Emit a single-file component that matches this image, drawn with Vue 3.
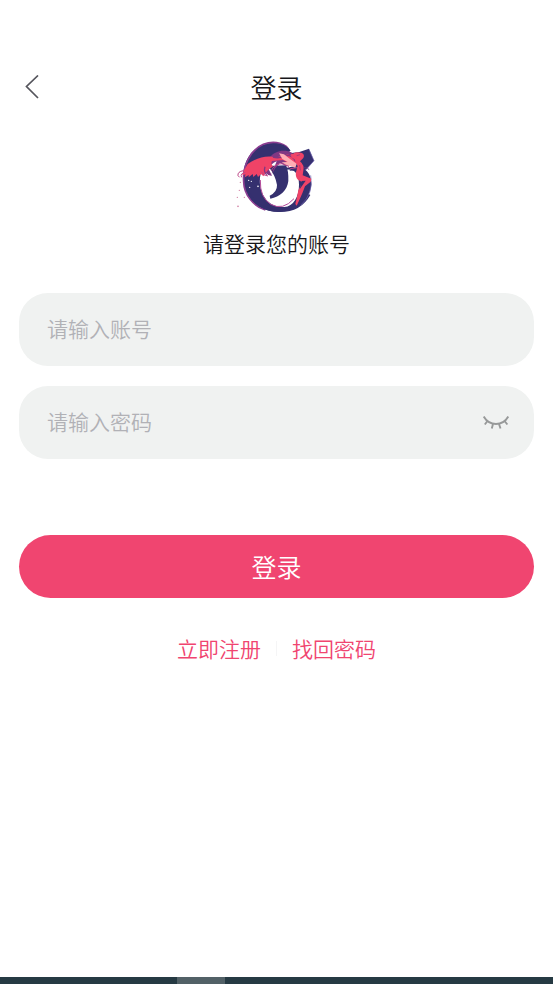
<template>
	<div class="page">
		<header class="header">
			<button type="button" class="back-btn" aria-label="返回">
				<svg width="14" height="24" viewBox="0 0 14 24">
					<path d="M13 .5 L1.5 11.5 L13 23" fill="none" stroke="#55555c" stroke-width="1.7" />
				</svg>
			</button>
			<h1 class="header-title">登录</h1>
		</header>

		<main class="content">
			<svg class="logo" viewBox="4 0 270 240" aria-hidden="true">
				<path
					d="M176 46 C172 29 149 19 122 20 C76 23 38 64 37 122 C36 178 75 222 130 227 C188 232 238 195 242 147 C243 114 225 93 196 90 L168 95 C157 92 148 94 139 99 L158 103 C190 94 205 113 205 146 C205 183 188 211 161 213 C120 216 92 183 88 146 C85 113 97 85 119 69 L172 47 Z"
					fill="#35306f"
				/>
				<path
					d="M176 46 C170 23 132 12 98 25 C57 43 36 91 39 137 C40 176 68 211 104 222"
					fill="none"
					stroke="#8c3d91"
					stroke-width="5"
				/>
				<path
					d="M109 33 Q151 14 177 46 M56 175 Q79 217 135 224 Q205 230 236 175"
					fill="none"
					stroke="#35306f"
					stroke-width="7"
				/>
				<path d="M89 132 Q87 184 120 205 Q157 225 190 188" fill="none" stroke="#b34b9b" stroke-width="3" />
				<path
					d="M112 90 L166 88 Q174 104 173 135 C170 163 148 183 119 188 L117 179 Q140 168 139 147 Q135 119 112 90 Z"
					fill="#35306f"
				/>
				<path d="M177 52 L206 48 L235 38 L250 74 L226 101 L176 104 L200 82 Z" fill="#35306f" />
				<path d="M235 41 L250 74 L226 101 M240 118 Q250 173 210 208" fill="none" stroke="#7064b0" stroke-width="2" />
				<path
					d="M184 50 C157 38 132 47 119 62 C101 76 95 98 107 112 Q112 120 124 119 L115 101 Q121 81 138 76 L122 116 L134 97 L148 81 L167 91 L200 82 L195 66 Z"
					fill="#813783"
				/>
				<path
					d="M207 55 C165 48 151 70 124 62 C98 59 71 70 51 84 C44 96 37 106 35 118 L44 115 L43 124 L54 117 L54 124 L66 114 L68 123 L78 114 L82 123 L91 114 L98 121 L110 104 L127 91 Q119 82 124 75 L157 72 L170 79 L198 84 Z"
					fill="#f04367"
				/>
				<path
					d="M103 92 Q98 107 108 116 M127 63 Q148 70 181 54"
					fill="none"
					stroke="#813783"
					stroke-width="4"
				/>
				<path
					d="M38 104 Q20 107 22 119 L27 124 M44 109 Q27 112 33 124 M92 107 Q97 119 112 120 M122 104 Q130 87 145 84 Q164 80 180 98 L207 94"
					fill="none"
					stroke="#bd4687"
					stroke-width="3"
				/>
				<path d="M145 52 L160 55 L177 68 L198 83 L194 95 L166 86 L153 79 L171 78 L155 69 Z" fill="#ffadb4" />
				<path d="M171 58 Q185 59 195 76" fill="none" stroke="#813783" stroke-width="4" />
				<path
					d="M188 53 Q195 46 211 50 Q224 54 218 66 L208 76 Q222 88 218 104 L216 118 L242 128 L240 137 L223 151 L215 172 L207 190 L198 209 L194 204 L199 183 L203 163 L215 139 L202 131 Q193 123 196 108 L201 91 L196 80 L192 70 L180 63 Z"
					fill="#f04367"
				/>
				<path
					d="M198 59 L208 56 M207 87 L209 103 M218 95 L231 96 L235 102"
					fill="none"
					stroke="#813783"
					stroke-width="2"
				/>
				<path d="M213 135 L225 134 L207 160 Z" fill="#35306f" />
				<g fill="#fff">
					<circle cx="54" cy="133" r="2" />
					<circle cx="62" cy="136" r="2" />
					<circle cx="82" cy="151" r="2.5" />
					<circle cx="57" cy="154" r="2" />
				</g>
				<g fill="#cf789e">
					<circle cx="29" cy="139" r="2" />
					<circle cx="26" cy="163" r="2" />
					<circle cx="41" cy="184" r="2" />
					<circle cx="20" cy="184" r="2" />
					<circle cx="22" cy="211" r="2.5" />
				</g>
			</svg>
			<h2 class="subtitle">请登录您的账号</h2>

			<form @submit.prevent>
				<div class="field">
					<input v-model="form.account" type="text" placeholder="请输入账号" aria-label="账号" />
				</div>
				<div class="field">
					<input
						v-model="form.password"
						:type="showPassword ? 'text' : 'password'"
						placeholder="请输入密码"
						aria-label="密码"
					/>
					<button type="button" class="eye-btn" aria-label="显示密码" @click="showPassword = !showPassword">
						<svg width="26" height="14" viewBox="0 0 26 14" fill="none" stroke="#979999" stroke-width="1.9">
							<path d="M.7 .5 C6.5 10.5 19.5 10.5 25.3 .5" />
							<path d="M4.5 5 L1.8 8.5 M10 8 L8.8 12.5 M16 8 L17.5 12.5 M21.5 5 L24.4 8.5" />
						</svg>
					</button>
				</div>
				<button type="submit" class="login-btn">登录</button>
			</form>

			<nav class="links">
				<a href="#">立即注册</a>
				<span class="divider"></span>
				<a href="#">找回密码</a>
			</nav>
		</main>

		<footer class="bottom-bar">
			<div class="bottom-tab"></div>
		</footer>
	</div>
</template>

<script setup>
	import { reactive, ref } from "vue"

	const form = reactive({ account: "", password: "" })
	const showPassword = ref(false)
</script>

<style>
	body {
		margin: 0;
		background: #fff;
	}
</style>

<style scoped>
	.page {
		display: flex;
		flex-direction: column;
		min-height: 100vh;
		font-family: "Noto Sans CJK SC", sans-serif;
		font-weight: 350;
		color: #17171a;
	}
	button,
	input {
		font-family: inherit;
		font-weight: inherit;
		border: none;
		padding: 0;
		background: none;
	}
	button {
		cursor: pointer;
	}
	.header {
		display: grid;
		grid-template-columns: 40px 1fr 40px;
		align-items: center;
		height: 46px;
		padding: 64px 12px 0;
	}
	.back-btn {
		display: flex;
		justify-content: center;
	}
	.header-title {
		margin: 0;
		font-size: 26px;
		font-weight: inherit;
		line-height: 46px;
		text-align: center;
	}
	.content {
		display: flex;
		flex-direction: column;
		padding: 26px 19px;
	}
	.logo {
		align-self: center;
		width: 90px;
		height: 80px;
	}
	.subtitle {
		margin: 11px 0 34px;
		font-size: 21px;
		font-weight: inherit;
		line-height: 32px;
		text-align: center;
	}
	.field {
		display: flex;
		align-items: center;
		height: 73px;
		margin-bottom: 20px;
		padding: 0 25px 0 28px;
		border-radius: 29px;
		background: #f0f2f1;
	}
	.field input {
		flex: 1;
		min-width: 0;
		height: 100%;
		padding-bottom: 3px;
		box-sizing: border-box;
		font-size: 21px;
		color: #17171a;
		outline: none;
	}
	.field input::placeholder {
		color: #b1b1b6;
		opacity: 1;
	}
	.eye-btn {
		display: flex;
	}
	.login-btn {
		width: 100%;
		height: 63px;
		margin-top: 56px;
		padding-bottom: 2px;
		border-radius: 32px;
		background: #f04570;
		font-size: 25px;
		color: #fff;
	}
	.links {
		display: flex;
		justify-content: center;
		align-items: center;
		margin-top: 34px;
	}
	.links a {
		font-size: 21px;
		line-height: 32px;
		color: #f04570;
		text-decoration: none;
	}
	.divider {
		width: 1px;
		height: 15px;
		margin: 0 15px;
		background: #f5f5f6;
	}
	.bottom-bar {
		height: 7px;
		margin-top: auto;
		background: #263a43;
	}
	.bottom-tab {
		width: 48px;
		height: 100%;
		margin-left: 32%;
		background: #526167;
	}
</style>
